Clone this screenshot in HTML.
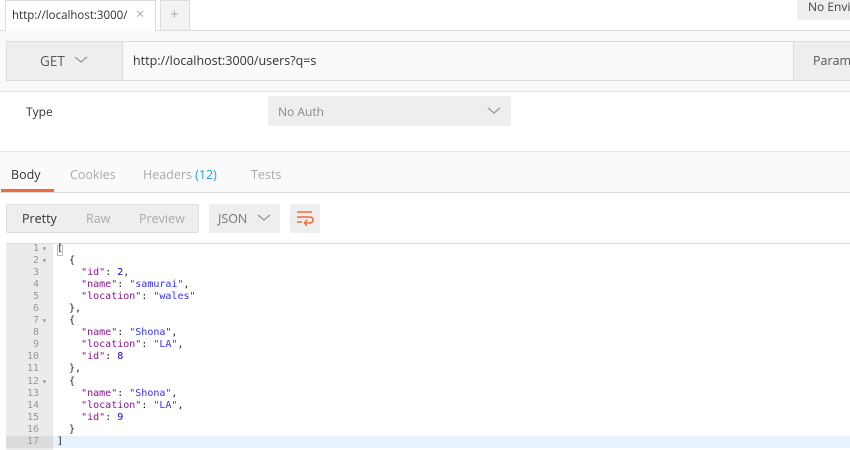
<!DOCTYPE html><html><head><style>
*{margin:0;padding:0;box-sizing:border-box}
body{width:850px;height:450px;overflow:hidden;background:#fff;font-family:"Open Sans","DejaVu Sans","Liberation Sans",sans-serif;font-size:12px;color:#505050;position:relative}
.a{position:absolute;white-space:nowrap}
.code{font-family:"DejaVu Sans Mono",monospace;font-size:10px;line-height:12.05px;white-space:pre}
.k{color:#881391}.s{color:#3232ff}.n{color:#1c00cf}
</style></head><body>
<div class="a" style="left:5px;top:0;width:151px;height:31px;border:1px solid #ddd;border-bottom:none;background:#fff;z-index:2"></div>
<div class="a" style="left:12px;top:8px;font-size:11.5px;color:#333;z-index:3">http://localhost:3000/</div>
<div class="a" style="left:136px;top:4px;font-size:15px;color:#aaa;z-index:3">×</div>
<div class="a" style="left:160px;top:0;width:30px;height:30px;border:1px solid #ddd;border-bottom:none;background:#f3f3f3"></div>
<div class="a" style="left:170px;top:4px;font-size:15px;color:#aaa">+</div>
<div class="a" style="left:797px;top:-4px;width:60px;height:24px;background:#eee;border-radius:3px"></div>
<div class="a" style="left:808px;top:-2px;font-size:12px;color:#444">No Envi</div>
<div class="a" style="left:0;top:30px;width:850px;height:62px;background:#f9f9f9;border-top:1px solid #ddd;border-bottom:1px solid #ddd"></div>
<div class="a" style="left:6px;top:41px;width:850px;height:40px;border:1px solid #ddd;background:#f9f9f9"></div>
<div class="a" style="left:7px;top:42px;width:116px;height:38px;background:#eee;border-right:1px solid #ddd"></div>
<div class="a" style="left:40px;top:52px;font-size:13.5px;color:#555">GET</div>
<svg class="a" style="left:74px;top:56px" width="14" height="8"><path d="M1 1l6 5 6-5" stroke="#999" fill="none" stroke-width="1.3"/></svg>
<div class="a" style="left:133px;top:52px;font-size:12.5px;color:#333">http://localhost:3000/users?q=s</div>
<div class="a" style="left:793px;top:42px;width:60px;height:38px;background:#eee;border-left:1px solid #ddd"></div>
<div class="a" style="left:813px;top:52px;font-size:12.5px;color:#555">Param</div>
<div class="a" style="left:26px;top:103px;font-size:12px;color:#333">Type</div>
<div class="a" style="left:268px;top:96px;width:243px;height:30px;background:#eee;border-radius:2px"></div>
<div class="a" style="left:278px;top:103px;font-size:12px;color:#888">No Auth</div>
<svg class="a" style="left:487px;top:107px" width="14" height="8"><path d="M1 1l6 5 6-5" stroke="#999" fill="none" stroke-width="1.3"/></svg>
<div class="a" style="left:0;top:151px;width:850px;height:42px;background:#fafafa;border-top:1px solid #e4e4e4;border-bottom:1px solid #ddd"></div>
<div class="a" style="left:11px;top:166px;font-size:12.5px;color:#333">Body</div>
<div class="a" style="left:1px;top:189px;width:53px;height:3px;background:#f26b3a"></div>
<div class="a" style="left:70px;top:166px;font-size:12.5px;color:#aaa">Cookies</div>
<div class="a" style="left:143px;top:166px;font-size:12.5px;color:#aaa">Headers <span style="color:#2d9bea">(12)</span></div>
<div class="a" style="left:251px;top:166px;font-size:12.5px;color:#aaa">Tests</div>
<div class="a" style="left:6px;top:204px;width:193px;height:29px;background:#eee;border:1px solid #ddd;border-radius:2px"></div>
<div class="a" style="left:22px;top:210px;font-size:12.5px;color:#333">Pretty</div>
<div class="a" style="left:86px;top:210px;font-size:12.5px;color:#aaa">Raw</div>
<div class="a" style="left:139px;top:210px;font-size:12.5px;color:#aaa">Preview</div>
<div class="a" style="left:209px;top:204px;width:71px;height:29px;background:#eee;border-radius:2px"></div>
<div class="a" style="left:218px;top:210px;font-size:12.5px;color:#777">JSON</div>
<svg class="a" style="left:257px;top:214px" width="14" height="8"><path d="M1 1l6 5 6-5" stroke="#999" fill="none" stroke-width="1.3"/></svg>
<div class="a" style="left:290px;top:204px;width:30px;height:29px;background:#eee;border-radius:2px"></div>
<svg class="a" style="left:296px;top:210px" width="18" height="16"><path d="M1 2h15M1 7h13a3 3 0 0 1 0 6h-5M1 12h5M11 10l-2.5 3 2.5 3" stroke="#f26b3a" fill="none" stroke-width="1.6"/></svg>
<div class="a" style="left:6px;top:243px;width:844px;height:207px;border-top:1px solid #ddd"></div>
<div class="a" style="left:6px;top:244px;width:47px;height:206px;background:#ebebeb"></div>
<div class="a" style="left:53px;top:436px;width:797px;height:12px;background:#e8f2fe"></div>
<div class="a" style="left:6px;top:436px;width:47px;height:12px;background:#dcdcdc"></div>
<div class="a code" style="left:6px;top:243px;width:33px;text-align:right;color:#999">1
2
3
4
5
6
7
8
9
10
11
12
13
14
15
16
17</div>
<div class="a code" style="left:42px;top:243px;color:#888;font-size:8px;line-height:12.05px">▾
▾
 
 
 
 
▾
 
 
 
 
▾</div>
<div class="a" style="left:57px;top:245px;width:6px;height:11px;border:1px solid #bbb"></div>
<div class="a code" style="left:57px;top:243px;color:#222">[
  {
    <span class="k">"id"</span>: <span class="n">2</span>,
    <span class="k">"name"</span>: <span class="s">"samurai"</span>,
    <span class="k">"location"</span>: <span class="s">"wales"</span>
  },
  {
    <span class="k">"name"</span>: <span class="s">"Shona"</span>,
    <span class="k">"location"</span>: <span class="s">"LA"</span>,
    <span class="k">"id"</span>: <span class="n">8</span>
  },
  {
    <span class="k">"name"</span>: <span class="s">"Shona"</span>,
    <span class="k">"location"</span>: <span class="s">"LA"</span>,
    <span class="k">"id"</span>: <span class="n">9</span>
  }
]</div>
</body></html>
